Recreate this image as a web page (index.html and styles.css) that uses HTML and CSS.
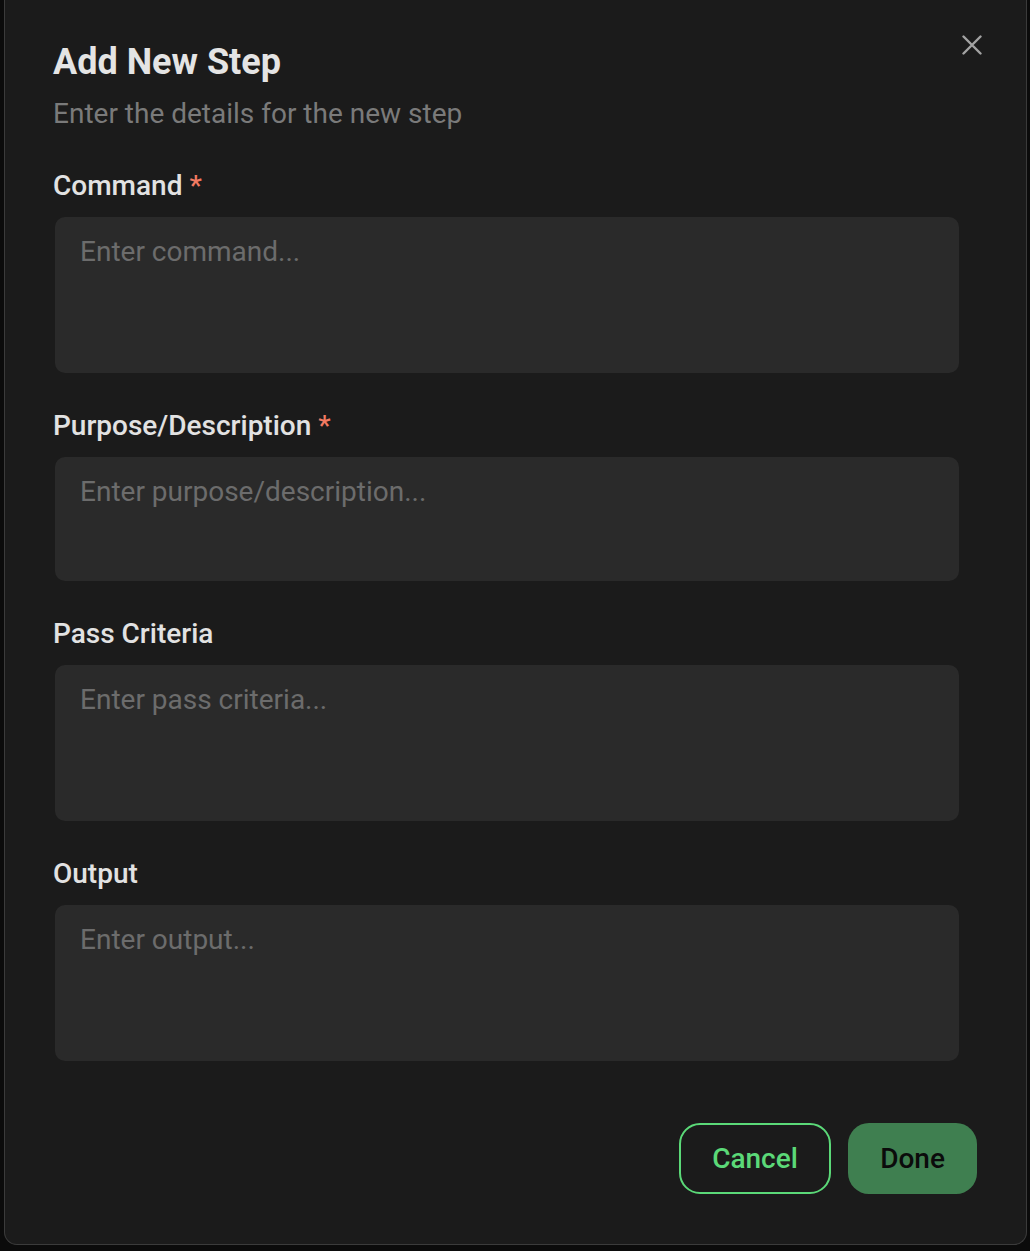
FILE: index.html
```html
<!DOCTYPE html>
<html lang="en">
<head>
<meta charset="utf-8">
<title>Add New Step</title>
<link rel="stylesheet" href="styles.css">
</head>
<body>
<div class="backdrop">
  <div class="modal">
    <div class="header">
      <div class="heading">
        <h1 class="title">Add New Step</h1>
        <p class="subtitle">Enter the details for the new step</p>
      </div>
      <button class="close" type="button" aria-label="Close">
        <svg width="20" height="20" viewBox="0 0 20 20" fill="none" stroke="#a3a3a3" stroke-width="2.4" stroke-linecap="round">
          <path d="M1.5 1.5 L18.5 18.5 M18.5 1.5 L1.5 18.5"/>
        </svg>
      </button>
    </div>
    <div class="fields">
      <div class="field">
        <label class="label">Command <span class="req">*</span></label>
        <div class="input tall">Enter command...</div>
      </div>
      <div class="field">
        <label class="label">Purpose/Description <span class="req">*</span></label>
        <div class="input short">Enter purpose/description...</div>
      </div>
      <div class="field">
        <label class="label">Pass Criteria</label>
        <div class="input tall">Enter pass criteria...</div>
      </div>
      <div class="field">
        <label class="label">Output</label>
        <div class="input tall">Enter output...</div>
      </div>
    </div>
    <div class="footer">
      <button class="btn btn-outline" type="button">Cancel</button>
      <button class="btn btn-solid" type="button">Done</button>
    </div>
  </div>
</div>
</body>
</html>
```
FILE: styles.css
```css
html, body {
  margin: 0;
  padding: 0;
  background: #0b0b0b;
}
body {
  width: 1030px;
  height: 1251px;
  overflow: hidden;
  font-family: Roboto, "Liberation Sans", Arial, sans-serif;
}
.backdrop {
  padding-left: 4px;
}
.modal {
  box-sizing: border-box;
  width: 1023px;
  height: 1245px;
  background: #1b1b1b;
  border: 1px solid #3b3b3b;
  border-top: none;
  border-radius: 0 0 13px 13px;
  padding: 41px 49px 49px 48px;
  display: flex;
  flex-direction: column;
}
.header {
  display: flex;
  justify-content: space-between;
  align-items: flex-start;
}
.title {
  margin: 0;
  font-size: 36px;
  line-height: 42px;
  font-weight: 700;
  color: #e4e4e4;
}
.subtitle {
  margin: 11px 0 0 0;
  font-size: 28px;
  line-height: 40px;
  color: #7a7a7a;
}
.close {
  width: 32px;
  height: 32px;
  margin: -12px -11px 0 0;
  padding: 0;
  border: none;
  background: transparent;
  display: flex;
  align-items: center;
  justify-content: center;
}
.fields {
  margin-top: 32px;
  display: flex;
  flex-direction: column;
  gap: 33px;
  padding-right: 18px;
}
.field {
  display: flex;
  flex-direction: column;
}
.label {
  font-size: 28px;
  line-height: 40px;
  font-weight: 500;
  color: #e2e2e2;
  margin-bottom: 11px;
}
.req {
  color: #f27a62;
}
.input {
  box-sizing: border-box;
  margin-left: 2px;
  background: #2a2a2a;
  border-radius: 10px;
  padding: 15px 25px 13px;
  font-size: 28px;
  line-height: 40px;
  color: #6c6c6c;
}
.tall {
  height: 156px;
}
.short {
  height: 124px;
}
.footer {
  margin-top: 62px;
  display: flex;
  justify-content: flex-end;
  gap: 17px;
}
.btn {
  box-sizing: border-box;
  height: 71px;
  padding: 0 32px;
  border-radius: 21px;
  font-family: Roboto, "Liberation Sans", Arial, sans-serif;
  font-size: 28px;
  font-weight: 500;
  display: flex;
  align-items: center;
  justify-content: center;
  border: 2px solid transparent;
}
.btn-outline {
  width: 152px;
  background: transparent;
  border-color: #5bd978;
  color: #5bd978;
}
.btn-solid {
  width: 129px;
  background: #3f7f50;
  color: #0b0b0b;
}
```
